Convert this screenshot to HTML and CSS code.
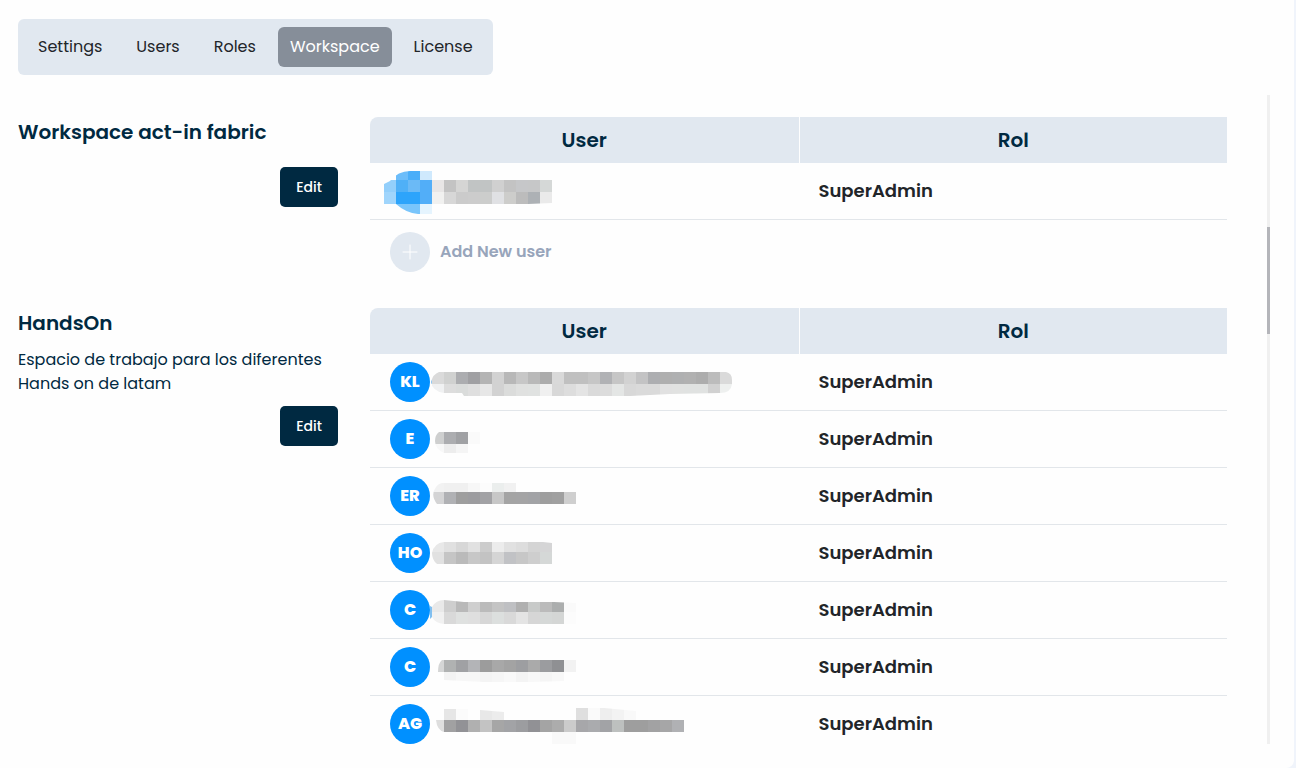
FILE: index.html
```html
<!DOCTYPE html>
<html lang="es">
  <head>
    <meta charset="UTF-8">
    <meta name="viewport" content="width=device-width, initial-scale=1">
    <title>Workspace</title>
    <link rel="stylesheet" href="styles.css">
  </head>
  <body>
    <main class="panel">
      <nav class="tabs">
        <a href="#settings">Settings</a>
        <a href="#users">Users</a>
        <a href="#roles">Roles</a>
        <a href="#workspace" class="active">Workspace</a>
        <a href="#license">License</a>
      </nav>

      <div class="content">
        <div class="workspaces">
          <section class="workspace">
            <div class="info">
              <h2>Workspace act-in fabric</h2>
              <button type="button" class="edit">Edit</button>
            </div>
            <table>
              <thead>
                <tr><th>User</th><th>Rol</th></tr>
              </thead>
              <tbody>
                <tr>
                  <td><div class="user hidden-user"><svg class="mask" data-mask="fabric" width="180" height="56"></svg></div></td>
                  <td>SuperAdmin</td>
                </tr>
                <tr class="add-row">
                  <td colspan="2">
                    <button type="button" class="add">
                      <span class="plus"><svg width="16" height="16" viewBox="0 0 16 16"><path d="M8 1v14M1 8h14" stroke="#fff" stroke-width="1" stroke-linecap="round"/></svg></span>
                      Add New user
                    </button>
                  </td>
                </tr>
              </tbody>
            </table>
          </section>

          <section class="workspace">
            <div class="info">
              <h2>HandsOn</h2>
              <p>Espacio de trabajo para los diferentes Hands on de latam</p>
              <button type="button" class="edit">Edit</button>
            </div>
            <table>
              <thead>
                <tr><th>User</th><th>Rol</th></tr>
              </thead>
              <tbody>
                <tr>
                  <td><div class="user"><span class="avatar">KL</span><svg class="mask" data-mask="kl" width="304" height="56"></svg></div></td>
                  <td>SuperAdmin</td>
                </tr>
                <tr>
                  <td><div class="user"><span class="avatar">E</span><svg class="mask" data-mask="e" width="304" height="56"></svg></div></td>
                  <td>SuperAdmin</td>
                </tr>
                <tr>
                  <td><div class="user"><span class="avatar">ER</span><svg class="mask" data-mask="er" width="304" height="56"></svg></div></td>
                  <td>SuperAdmin</td>
                </tr>
                <tr>
                  <td><div class="user"><span class="avatar">HO</span><svg class="mask" data-mask="ho" width="304" height="56"></svg></div></td>
                  <td>SuperAdmin</td>
                </tr>
                <tr>
                  <td><div class="user"><span class="avatar">C</span><svg class="mask" data-mask="c1" width="304" height="56"></svg></div></td>
                  <td>SuperAdmin</td>
                </tr>
                <tr>
                  <td><div class="user"><span class="avatar">C</span><svg class="mask" data-mask="c2" width="304" height="56"></svg></div></td>
                  <td>SuperAdmin</td>
                </tr>
                <tr>
                  <td><div class="user"><span class="avatar">AG</span><svg class="mask" data-mask="ag" width="304" height="56"></svg></div></td>
                  <td>SuperAdmin</td>
                </tr>
              </tbody>
            </table>
          </section>
        </div>
        <div class="scrollbar"><span class="thumb"></span></div>
      </div>
    </main>
    <script src="masks.js"></script>
  </body>
</html>
```

FILE: styles.css
```css
* {
  box-sizing: border-box;
}

body {
  margin: 0;
  padding-right: 2px;
  background: #f0f4fb;
  color: #212529;
  font-family: Poppins, Inter, sans-serif;
  font-size: 16px;
  line-height: 24px;
}

.panel {
  display: flex;
  flex-direction: column;
  height: 100vh;
  padding: 19px 24px 24px 18px;
  background: #fefefe;
  border-bottom-right-radius: 8px;
}

.tabs {
  display: flex;
  gap: 10px;
  align-self: flex-start;
  padding: 8px;
  background: #e1e8f0;
  border-radius: 6px;
}

.tabs a {
  padding: 8px 12px;
  color: #212529;
  text-decoration: none;
  border-radius: 6px;
}

.tabs .active {
  background: #868e99;
  color: #fff;
}

.content {
  display: flex;
  flex: 1;
  min-height: 0;
  margin-top: 20px;
}

.workspaces {
  flex: 1;
  overflow: hidden;
  padding: 22px 40px 0 0;
}

.workspace {
  display: flex;
  align-items: flex-start;
  gap: 32px;
  margin-bottom: 24px;
}

.info {
  display: flex;
  flex-direction: column;
  flex: 0 0 320px;
  color: #002941;
}

.info h2 {
  margin: 0;
  font-size: 20px;
  font-weight: 600;
  line-height: 30px;
}

.info p {
  margin: 10px 0 0;
}

.edit {
  align-self: flex-end;
  height: 40px;
  margin-top: 10px;
  padding: 0 16px;
  background: #002941;
  color: #fff;
  border: none;
  border-radius: 5px;
  font: 500 14px Poppins, Inter, sans-serif;
  cursor: pointer;
}

.info h2 + .edit {
  margin-top: 20px;
}

table {
  width: 100%;
  border-collapse: separate;
  border-spacing: 0;
  table-layout: fixed;
}

th {
  height: 46px;
  padding: 0;
  background: #e1e8f0;
  color: #002941;
  font-size: 20px;
  font-weight: 600;
}

th:first-child {
  border-top-left-radius: 8px;
}

th:last-child {
  border-left: 1px solid #fefefe;
}

td {
  height: 57px;
  padding: 0 20px;
  border-bottom: 1px solid #e2e6ea;
  font-size: 18px;
  font-weight: 600;
}

td:first-child {
  padding-right: 0;
}

.user {
  display: flex;
  align-items: center;
}

.hidden-user {
  margin-left: -6px;
}

.avatar {
  display: flex;
  align-items: center;
  justify-content: center;
  width: 40px;
  height: 40px;
  background: #0090ff;
  color: #fff;
  border-radius: 50%;
  font-size: 16px;
  font-weight: 800;
}

.mask {
  display: block;
}

.add-row td {
  height: 64px;
  border-bottom: none;
}

.add {
  display: flex;
  align-items: center;
  gap: 10px;
  padding: 0;
  background: none;
  border: none;
  color: #98a5bb;
  font: 600 16px/24px Poppins, Inter, sans-serif;
  cursor: pointer;
}

.plus {
  display: flex;
  align-items: center;
  justify-content: center;
  width: 40px;
  height: 40px;
  background: #e1e8f0;
  border-radius: 50%;
}

.scrollbar {
  display: grid;
  grid-template-rows: 132fr 107fr 410fr;
  width: 3px;
  background: #f0f0f0;
}

.thumb {
  grid-row: 2;
  background: #b4b5ba;
}
```

FILE: masks.js
```js
// Hidden names: strips of 12px blocks, [x, y, height, colors], cut by an outline
const masks = {
  fabric: {
    outline: "M0 21 L6 18 Q14 8 26 8 H48 V17 H168 V40 L144 41 H48 V51 H34 Q22 50 12 41 H0Z",
    strips: [
      [12, 8, 9, "6cbdfa 4aaef9 cfe9fd"],
      [0, 17, 12, "93cffb 4fb0f7 6bbaf6 52aef8 e8e6e6 c3c3c3 d5d5d4 c1c4c4 c1c4c4 d0d0d0 c3c3c3 c6c7c9 c6c7c8 d5d8d7"],
      [0, 29, 12, "a0d5fc 2da4fb 2da4fb 52aef8 f1f1f0 d7d7d7 cbcbcb cccccc cccdcc e0e1e4 cdcdcb bcbcbc adb1b5 eaeaea"],
      [12, 41, 10, "79c5fb 79c5fb e5f4fe"]
    ]
  },
  kl: {
    outline: "M9 18 H296 Q302 19 302 26 V30 Q301 39 290 39 L240 40 L200 42 H34 L32 39 H14 Q2 37 1 28 Q3 20 9 18Z",
    strips: [
      [-10, 18, 12, "80bff0 dadada d0d1d0 acadb0 a0a0a3 b4b4b4 d2d2d2 b8b8b8 c7c7c7 b9b9b9 acacac d9d9d9 c0c0c0 c0c0c0 c6c6c6 b1b2b5 c6c6c6 d2d2d2 c3c3c4 adaeb1 afafaf afb0b1 b1b1b1 adadad bcbcbc dadada"],
      [2, 30, 12, "f0f1f2 dddddd dadcdb dfdfdf e7e7e7 d2d2d2 dbdcdb e0e1e0 e0e2e1 f0f0f0 d8d8d8 dddddd e4e4e4 dadada dcdcdc e4e6e5 d8d8d8 dadada dadada e1e1e1 e1e2e1 e0e2e1 e0e2e1 d1d1d1 eef0ef"]
    ]
  },
  e: {
    outline: "M9 21 H50 V33 H38 V42 H14 Q5 38 5 30 Q5 24 9 21Z",
    strips: [
      [2, 21, 12, "cecfcf acadb0 a0a1a4 fafafa"],
      [2, 33, 9, "f8f8f8 ededed f5f5f5"]
    ]
  },
  er: {
    outline: "M13 15 H86 V24 H146 V36 H7 Q0 27 6 19 Q9 15 13 15Z",
    strips: [
      [2, 15, 9, "f2f2f2 f0f0f0 f0f0f0 f7f7f7 fcfcfc ebeeed f1f1f1"],
      [2, 24, 12, "d4d4d5 b0b1b4 9e9e9e 9c9c9f a2a2a5 c7c7c7 a4a4a4 a4a4a5 a2a3a6 9e9e9e a0a0a0 cfcfcf"]
    ]
  },
  ho: {
    outline: "M14 17 H113 L122 18 V39 H7 Q2 35 2 28 Q4 18 14 17Z",
    strips: [
      [2, 17, 10, "e8e8e8 e0e0e0 d7d7d7 e1e1e1 cccccc ececec e1e1e1 dddddd d4d4d4 d5d5d6"],
      [2, 27, 12, "e1e1e1 c5c5c5 bababa c7c7c7 c3c3c3 d5d5d5 c1c2c5 c7c7c7 cecece d5d8d7"]
    ]
  },
  c1: {
    outline: "M0 24 L2 25 Q6 18 14 18 L34 20 H124 L146 21 V42 H14 Q5 41 2 35 L0 37Z",
    strips: [
      [-10, 24, 13, "80bff0"],
      [2, 18, 12, "e9e9e9 cecece b9b9b9 cfcfcf bbbbbb c4c4c4 bfc0c3 b0b0b0 c8cac9 bbbbbb acaeae fafafa"],
      [2, 30, 12, "f1f1f1 d9d9d9 dfe1e0 dfdfdf d7d7d7 dcdfde d9d9d9 e4e4e4 d6d6d6 d5d8d7 d4d6d5 fcfcfc"]
    ]
  },
  c2: {
    outline: "M12 21 H146 V33 H134 V42 L100 43 H54 L14 41 V33 H8 Q8 24 12 21Z",
    strips: [
      [2, 21, 12, "d5d6d6 b0b2b2 a0a1a4 b3b4b7 9c9c9c a8a8a8 a3a3a3 9d9ea1 aaaaaa 9b9c9f 8f9093 f2f2f2"],
      [14, 33, 10, "f3f3f3 f7f7f7 f7f7f7 f4f4f4 f6f6f6 f9f9f9 f4f4f4 f8f8f8 f5f5f5 f8f8f8"]
    ]
  },
  ag: {
    outline: "M6 24 H14 V13 H38 V24 H50 V14 L74 16 V24 H146 V12 H174 L206 15 V24 H254 V36 H146 V48 H122 V36 H14 Q7 34 6 24Z",
    strips: [
      [14, 12, 12, "e6e6e6 fbfbfb"],
      [50, 12, 12, "e8e8e8 ececec"],
      [146, 12, 12, "dfdfdf fafafa eeeeee f3f3f3 f9f9f9"],
      [2, 24, 12, "dedede a1a1a2 929296 b0b0b0 c3c3c3 a6a6a6 a2a3a6 9c9da0 919195 a4a4a4 acacac cbcbcb a7a7aa aaabae a2a3a6 bdc0bf 9e9e9e 9e9e9e a2a2a3 a6a6a7 b0b1b4"],
      [122, 36, 12, "f9f9f9 f9f9f9"]
    ]
  }
};

document.querySelectorAll(".mask").forEach(function (svg) {
  const name = svg.dataset.mask;
  const mask = masks[name];
  let blocks = "";

  mask.strips.forEach(function ([x, y, height, colors]) {
    colors.split(" ").forEach(function (color, i) {
      blocks += `<rect x="${x + i * 12}" y="${y}" width="12" height="${height}" fill="#${color}"/>`;
    });
  });

  svg.innerHTML = `
    <clipPath id="outline-${name}"><path d="${mask.outline}"/></clipPath>
    <g clip-path="url(#outline-${name})" shape-rendering="crispEdges">${blocks}</g>
  `;
});
```
